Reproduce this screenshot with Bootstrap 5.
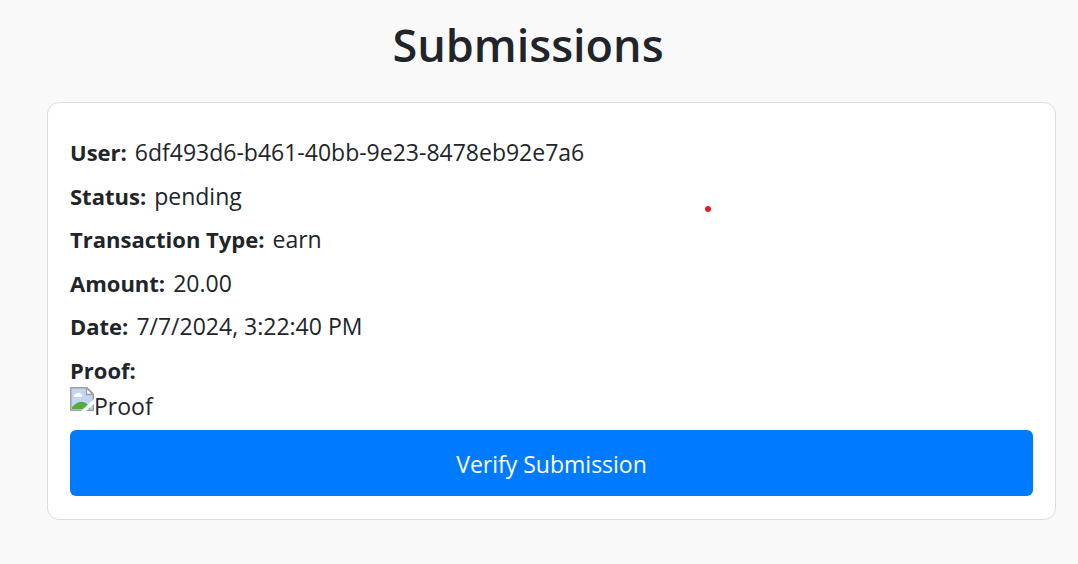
<!DOCTYPE html>
<html lang="en">
<head>
<meta charset="utf-8">
<meta name="viewport" content="width=device-width, initial-scale=1">
<title>Submissions</title>
<link href="https://cdn.jsdelivr.net/npm/bootstrap@5.3.0/dist/css/bootstrap.min.css" rel="stylesheet">
<style>
  body { background: #f9f9f9; color: #212529; font-family: "Segoe UI", "Open Sans", "Noto Sans", sans-serif; font-size: 23px; line-height: 1.5; }
  .page-title { font-size: 45px; font-weight: 600; line-height: 54px; margin: 0 47px 30px 0; }
  .submissions { padding: 18px 22px 44px 47px; }
  .submission { border: 1px solid #ddd; border-radius: 12px; padding: 32px 22px 23px; }
  .submission p { margin-bottom: 9px; }
  .submission strong { font-size: 22px; margin-right: 2px; }
  .submission .proof-line { margin-bottom: 0; }
  .proof { line-height: 38px; margin-bottom: 5px; }
  .proof svg { width: 24px; height: 24px; }
  .btn-verify { --bs-btn-bg: #007bff; --bs-btn-color: #fff; --bs-btn-hover-bg: #0069d9; --bs-btn-hover-color: #fff; font-size: 23px; line-height: 36px; padding: 16px 16px 14px; border: 0; border-radius: 6px; }
  .red-dot { left: 61%; top: 206px; width: 6px; height: 6px; margin-left: 47px; background: #e81b23; }
</style>
</head>
<body>
<main class="submissions position-relative">
  <h1 class="page-title text-center">Submissions</h1>
  <section class="submission bg-white">
    <p><strong>User:</strong> 6df493d6-b461-40bb-9e23-8478eb92e7a6</p>
    <p><strong>Status:</strong> pending</p>
    <p><strong>Transaction Type:</strong> earn</p>
    <p><strong>Amount:</strong> 20.00</p>
    <p><strong>Date:</strong> 7/7/2024, 3:22:40 PM</p>
    <p class="proof-line"><strong>Proof:</strong></p>
    <div class="proof d-flex align-items-start">
      <svg viewBox="0 0 24 24" aria-hidden="true">
        <path d="M1 1H17L23 7V23H1Z" fill="#c3d5f5"/>
        <path d="M4 10a2 2 0 0 1 2-3a3 3 0 0 1 5 0a2 2 0 0 1 1 3H4Z" fill="#fff"/>
        <path d="M2 22V20Q8 14 13 15Q18 16 20 22Z" fill="#52ad3a"/>
        <path d="M.75 23.5V.75H17L23.25 7V23.25H.75" fill="none" stroke="#a0a0a0" stroke-width="1.5"/>
        <path d="M16.5 1V7.5H23Z" fill="#fff" stroke="#a0a0a0" stroke-width="1.3"/>
        <path d="M24 12L11 24H16L24 17Z" fill="#fff"/>
      </svg>
      <span>Proof</span>
    </div>
    <button type="button" class="btn btn-verify w-100">Verify Submission</button>
  </section>
  <span class="red-dot position-absolute rounded-circle"></span>
</main>
<script src="https://cdn.jsdelivr.net/npm/bootstrap@5.3.0/dist/js/bootstrap.bundle.min.js"></script>
</body>
</html>
